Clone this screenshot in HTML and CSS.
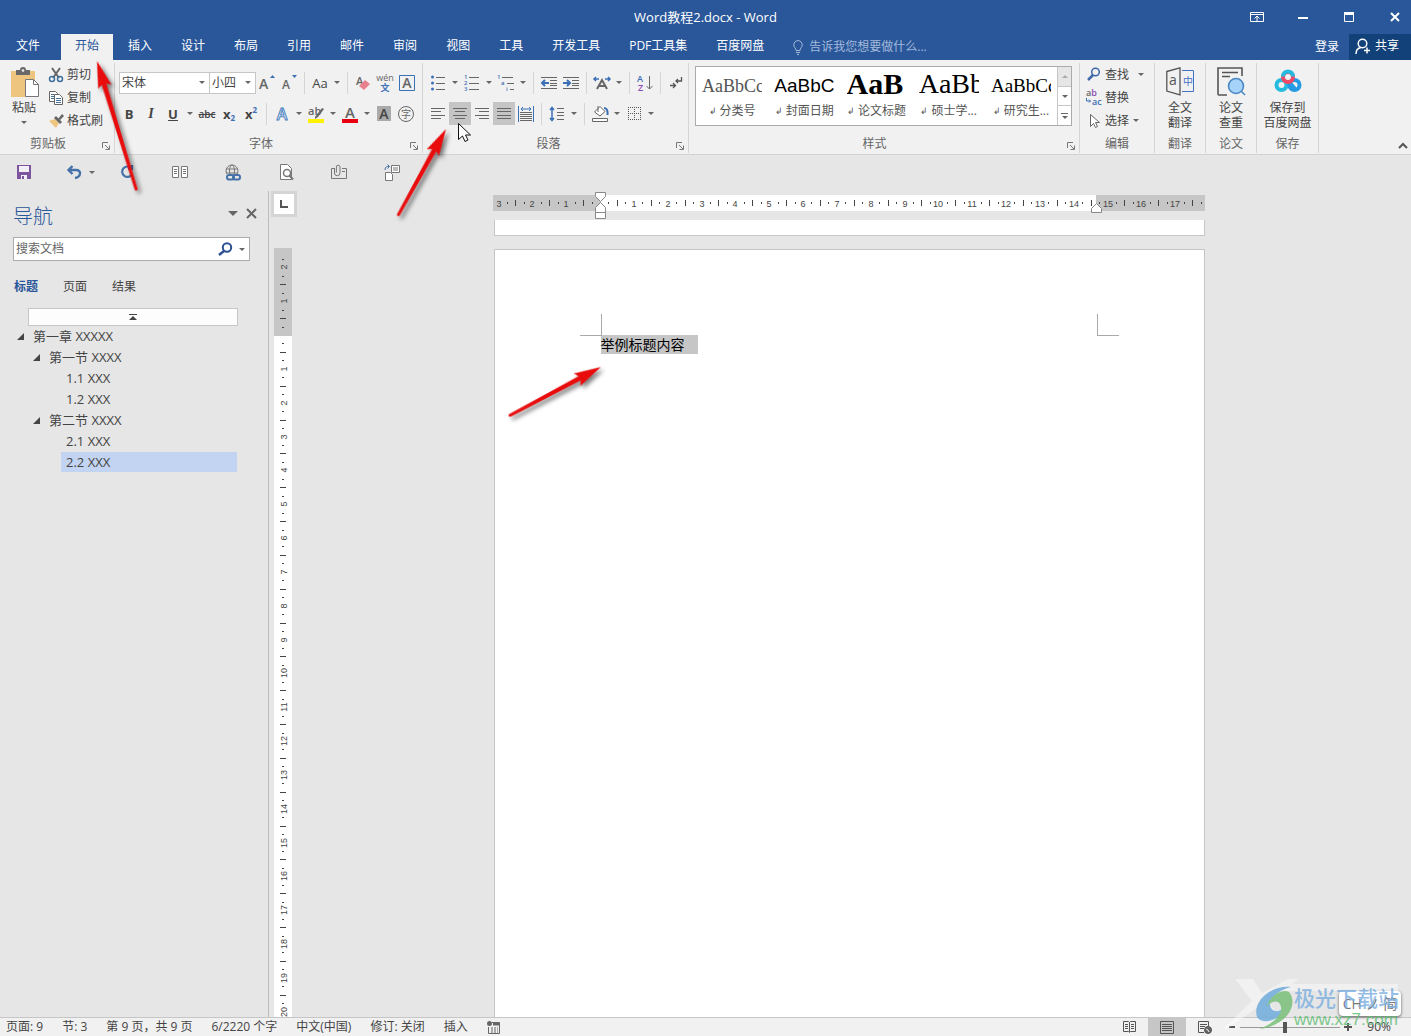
FILE: index.html
```html
<!DOCTYPE html>
<html lang="zh-CN">
<head>
<meta charset="utf-8">
<title>Word教程2.docx - Word</title>
<link rel="stylesheet" href="styles.css">
</head>
<body>
<header class="titlebar">
  <h1 class="title">Word教程2.docx - Word</h1>
  <div class="window-buttons">
    <button aria-label="功能区显示选项"><svg width="14" height="12" fill="none" stroke="#fff"><path d="M.5 1.500h13v9H.5zM.5 3.500h13M7 10V5M4.500 7.500 7 5l2.500 2.500"/></svg></button>
    <button aria-label="最小化"><svg width="10" height="12"><path d="M0 6h10v2H0z" fill="#fff"/></svg></button>
    <button aria-label="最大化"><svg width="10" height="12" fill="none" stroke="#fff"><path d="M.5 1.500h9v9h-9z"/><path d="M0 2.500h10" stroke-width="3"/></svg></button>
    <button aria-label="关闭"><svg width="10" height="10" stroke="#fff" stroke-width="2"><path d="m1 1 8 8M9 1 1 9"/></svg></button>
  </div>
</header>

<nav class="tabs">
  <button class="tab file">文件</button>
  <button class="tab active">开始</button>
  <button class="tab">插入</button>
  <button class="tab">设计</button>
  <button class="tab">布局</button>
  <button class="tab">引用</button>
  <button class="tab">邮件</button>
  <button class="tab">审阅</button>
  <button class="tab">视图</button>
  <button class="tab">工具</button>
  <button class="tab">开发工具</button>
  <button class="tab">PDF工具集</button>
  <button class="tab">百度网盘</button>
  <button class="tell-me"><svg width="10" height="15" fill="none" stroke="currentColor" stroke-width="1"><path d="M3 10.500C3 8 .8 7.500.8 4.800a4.200 4.200 0 0 1 8.400 0C9.200 7.500 7 8 7 10.500zM3 12.500h4M4 14.500h2"/></svg>告诉我您想要做什么...</button>
  <button class="login">登录</button>
  <button class="share"><svg width="16" height="17" fill="none" stroke="#fff" stroke-width="1.500"><circle cx="7.500" cy="5.500" r="4.300"/><path d="M1 16c0-4 2-6 5-6.500M9 12.500h6M12 9.500v6"/></svg>共享</button>
</nav>

<section class="ribbon">
  <div class="group clipboard">
    <div class="group-body clip-body">
      <button class="big paste">
        <svg width="30" height="31"><path d="M2 4h24v26H2z" fill="#edc57f"/><path d="M7 3h4a3 3 0 0 1 6 0h4v5H7z" fill="#696969"/><circle cx="14" cy="3.500" r="1.300" fill="#f1f1f1"/><path d="M16.500 12.500h8l5 5v12h-13z" fill="#fff" stroke="#777"/><path d="M24.500 12.500v5h5" fill="none" stroke="#777"/></svg>
        粘贴<i class="caret"></i>
      </button>
      <div class="stack">
        <button class="small"><svg width="16" height="16" fill="none"><path d="m4 1 7 10M12 1 5 11" stroke="#666" stroke-width="2"/><circle cx="4" cy="12" r="2.500" stroke="#41719c" stroke-width="1.500"/><circle cx="12" cy="12" r="2.500" stroke="#41719c" stroke-width="1.500"/></svg>剪切</button>
        <button class="small"><svg width="16" height="16" fill="#fff" stroke="#666"><path d="M1.500 1.500h6l2 2v8h-8z"/><path d="M3 4.500h3M3 6.500h3M3 8.500h3" stroke="#41719c"/><path d="M6.500 4.500h5l3 3v7h-8z"/><path d="M8 8.500h5M8 10.500h5M8 12.500h5" stroke="#41719c"/></svg>复制</button>
        <button class="small"><svg width="16" height="16"><path d="m1 8 6-2 4 4-3 5z" fill="#edc57f"/><path d="m6 5 2-2 6 6-2 2z" fill="#666"/><path d="m10 6 4-5 2 2-4 4z" fill="#666"/></svg>格式刷</button>
      </div>
    </div>
    <div class="group-label">剪贴板</div><button class="launcher" aria-label="剪贴板设置"><svg width="8" height="8" fill="none" stroke="#777"><path d="M.5 6V.500H6M3 3l4 4M7.500 3.500v4h-4"/></svg></button>
  </div>

  <div class="group font">
    <div class="group-body">
      <div class="row">
        <label class="combo name"><select aria-label="字体"><option>宋体</option></select><i class="caret"></i></label>
        <label class="combo size"><select aria-label="字号"><option>小四</option></select><i class="caret"></i></label>
        <button class="tool"><svg width="18" height="18"><text x="1" y="15" class="ic" font-size="14">A</text><path d="m12 4 2.500-3L17 4z" fill="#3b6fb6"/></svg></button>
        <button class="tool"><svg width="18" height="18"><text x="2" y="15" class="ic" font-size="12">A</text><path d="m12 1 2.500 3L17 1z" fill="#3b6fb6"/></svg></button>
        <i class="sep"></i>
        <button class="tool case">Aa</button><i class="caret drop"></i>
        <i class="sep"></i>
        <button class="tool"><svg width="18" height="18"><text x="2" y="11" class="ic" font-size="11">A</text><path d="m5 12 6-6 5 4-6 6z" fill="#e8808e"/></svg></button>
        <button class="tool"><svg width="18" height="20"><text x="9" y="8" text-anchor="middle" font-size="9" class="ic thin">wén</text><text x="9" y="18" text-anchor="middle" font-size="9" class="ic blue">文</text></svg></button>
        <button class="tool"><svg width="16" height="16"><path d="M.5.500h15v15H.5z" fill="none" stroke="#3b6fb6"/><text x="8" y="13" text-anchor="middle" class="ic" font-size="14">A</text></svg></button>
      </div>
      <div class="row">
        <button class="tool bold">B</button>
        <button class="tool italic">I</button>
        <button class="tool under">U</button><i class="caret drop"></i>
        <button class="tool strike">abc</button>
        <button class="tool bold">x<sub>2</sub></button>
        <button class="tool bold">x<sup>2</sup></button>
        <i class="sep"></i>
        <button class="tool"><svg width="18" height="18"><text x="9" y="15" text-anchor="middle" font-size="16" font-weight="600" font-family="Open Sans" fill="#fff" stroke="#4a7fc1" stroke-width="1">A</text></svg></button><i class="caret drop"></i>
        <button class="tool"><svg width="18" height="20"><text x="1" y="11" class="ic" font-size="11">ab</text><path d="m8 13 7-9 2 1-6 8-3 2z" fill="#666"/><path d="M1 15h16v4H1z" fill="#fff200"/></svg></button><i class="caret drop"></i>
        <button class="tool"><svg width="18" height="20"><text x="9" y="14" text-anchor="middle" class="ic" font-size="15">A</text><path d="M1 15h16v4H1z" fill="#e60012"/></svg></button><i class="caret drop"></i>
        <button class="tool"><svg width="14" height="15"><path d="M0 0h14v15H0z" fill="#aaa"/><text x="7" y="13" text-anchor="middle" class="ic dark" font-size="14">A</text></svg></button>
        <button class="tool"><svg width="16" height="16"><circle cx="8" cy="8" r="7.500" fill="none" stroke="#666"/><text x="8" y="12" text-anchor="middle" class="ic thin" font-size="10">字</text></svg></button>
      </div>
    </div>
    <div class="group-label">字体</div><button class="launcher" aria-label="字体设置"><svg width="8" height="8" fill="none" stroke="#777"><path d="M.5 6V.500H6M3 3l4 4M7.500 3.500v4h-4"/></svg></button>
  </div>

  <div class="group para">
    <div class="group-body">
      <div class="row">
        <button class="tool" aria-label="项目符号"><svg width="14" height="16"><g fill="#3b6fb6"><circle cx="1.500" cy="2" r="1.500"/><circle cx="1.500" cy="8" r="1.500"/><circle cx="1.500" cy="14" r="1.500"/></g><path d="M5 2.500h9M5 8.500h9M5 14.500h9" stroke="#666"/></svg></button><i class="caret drop"></i>
        <button class="tool"><svg width="16" height="18"><g class="num" font-size="6"><text x="0" y="5">1</text><text x="0" y="11">2</text><text x="0" y="17">3</text></g><path d="M5 3.500h10M5 9.500h10M5 15.500h10" stroke="#666"/></svg></button><i class="caret drop"></i>
        <button class="tool"><svg width="18" height="18"><g class="num" font-size="6"><text x="0" y="5">1</text><text x="4" y="11">a</text><text x="9" y="17">i</text></g><path d="M5 3.500h11M10 9.500h7M13 15.500h4" stroke="#666"/></svg></button><i class="caret drop"></i>
        <i class="sep"></i>
        <button class="tool" aria-label="减少缩进"><svg width="16" height="14" fill="none" stroke="#666"><path d="M0 1.500h16M9 4.500h7M9 7.500h7M9 9.500h7M0 12.500h16"/><path d="M8 7H1M4 4 1 7l3 3" stroke="#3b6fb6" stroke-width="2"/></svg></button>
        <button class="tool" aria-label="增加缩进"><svg width="16" height="14" fill="none" stroke="#666"><path d="M0 1.500h16M9 4.500h7M9 7.500h7M9 9.500h7M0 12.500h16"/><path d="M0 7h7M4 4l3 3-3 3" stroke="#3b6fb6" stroke-width="2"/></svg></button>
        <i class="sep"></i>
        <button class="tool"><svg width="18" height="16" fill="none"><path d="m4 14 5-9 5 9M6 11h6" stroke="#666" stroke-width="2"/><path d="M1 4h5M3 2 1 4l2 2M17 4h-5M15 2l2 2-2 2" stroke="#3b6fb6" stroke-width="1.500"/></svg></button><i class="caret drop"></i>
        <i class="sep"></i>
        <button class="tool"><svg width="16" height="18"><text x="0" y="8" font-size="9" class="ic blue">A</text><text x="1" y="17" font-size="9" class="ic purple">Z</text><path d="M12.500 2v13M9.500 12l3 3 3-3" fill="none" stroke="#666"/></svg></button>
        <i class="sep"></i>
        <button class="tool" aria-label="显示编辑标记"><svg width="14" height="14" fill="none" stroke="#555" stroke-width="1.300"><path d="M12.500 1v4H7M9 3 7 5l2 2M1 9.500h5M4 7l2.500 2.500L4 12"/></svg></button>
      </div>
      <div class="row">
        <button class="tool" aria-label="左对齐"><svg width="14" height="11" stroke="#666"><path d="M0 .5h14M0 3.500h10M0 7.500h14M0 10.500h10"/></svg></button>
        <button class="tool on" aria-label="居中"><svg width="14" height="11" stroke="#666"><path d="M0 .5h14M2 3.500h10M0 7.500h14M2 10.500h10"/></svg></button>
        <button class="tool" aria-label="右对齐"><svg width="14" height="11" stroke="#666"><path d="M0 .5h14M4 3.500h10M0 7.500h14M4 10.500h10"/></svg></button>
        <button class="tool on" aria-label="两端对齐"><svg width="14" height="11" stroke="#666"><path d="M0 .5h14M0 3.500h14M0 7.500h14M0 10.500h14"/></svg></button>
        <button class="tool" aria-label="分散对齐"><svg width="16" height="16" fill="none" stroke="#3b6fb6"><path d="M.5 0v16M15.500 0v16M3 3h10M5 1 3 3l2 2M11 1l2 2-2 2"/><path d="M2 6.500h12M2 8.500h12M2 10.500h12M2 12.500h12M2 14.500h12" stroke="#666"/></svg></button>
        <i class="sep"></i>
        <button class="tool" aria-label="行距"><svg width="16" height="16" fill="none" stroke="#666"><path d="M8 2.500h7M8 6.500h7M8 9.500h7M8 13.500h7"/><path d="M3 1v14M1 4l2-2.500L5 4M1 12l2 2.500L5 12" stroke="#3b6fb6" stroke-width="1.500"/></svg></button><i class="caret drop"></i>
        <i class="sep"></i>
        <button class="tool" aria-label="底纹"><svg width="17" height="17" fill="#fff" stroke="#666"><path d="M6 1v6M2.500 7 8 1.500l5 5L8 11z"/><path d="M12 3c3 0 4 3 3.500 7" fill="none" stroke="#3b6fb6" stroke-width="2"/><path d="M.5 13.500h15v3H.5z"/></svg></button><i class="caret drop"></i>
        <button class="tool" aria-label="边框"><svg width="13" height="13" fill="none" stroke="#555" stroke-dasharray="1 1"><path d="M0 .5h13M0 6.500h13M0 12.500h13M.5 0v13M6.500 0v13M12.500 0v13"/></svg></button><i class="caret drop"></i>
      </div>
    </div>
    <div class="group-label">段落</div><button class="launcher" aria-label="段落设置"><svg width="8" height="8" fill="none" stroke="#777"><path d="M.5 6V.500H6M3 3l4 4M7.500 3.500v4h-4"/></svg></button>
  </div>

  <div class="group styles">
    <div class="gallery">
      <button class="style"><span class="sample s1">AaBbCc</span><span class="style-name"><i class="mark">↲</i>分类号</span></button>
      <button class="style"><span class="sample s2">AaBbCc</span><span class="style-name"><i class="mark">↲</i>封面日期</span></button>
      <button class="style"><span class="sample s3">AaB</span><span class="style-name"><i class="mark">↲</i>论文标题</span></button>
      <button class="style"><span class="sample s4">AaBb</span><span class="style-name"><i class="mark">↲</i>硕士学...</span></button>
      <button class="style"><span class="sample s5">AaBbCc</span><span class="style-name"><i class="mark">↲</i>研究生...</span></button>
      <div class="scroller"><button class="off" aria-label="上一行"><i class="caret up"></i></button><button aria-label="下一行"><i class="caret"></i></button><button class="more" aria-label="更多"><i class="caret"></i></button></div>
    </div>
    <div class="group-label">样式</div><button class="launcher" aria-label="样式设置"><svg width="8" height="8" fill="none" stroke="#777"><path d="M.5 6V.500H6M3 3l4 4M7.500 3.500v4h-4"/></svg></button>
  </div>

  <div class="group edit">
    <div class="group-body stack">
      <button class="small"><svg width="16" height="16" fill="none" stroke="#3f68a8"><circle cx="9.500" cy="5" r="3.800" stroke-width="1.500"/><path d="m7 8-5 5" stroke-width="2.500"/></svg>查找<i class="caret far"></i></button>
      <button class="small"><svg width="16" height="18"><text x="0" y="7" class="ic" font-size="9">a<tspan fill="#8c4bb0">b</tspan></text><text x="6" y="16" class="ic blue" font-size="9">ac</text><path d="M.5 9v3h4M3 10.500 4.500 12 3 13.500" fill="none" stroke="#3b6fb6"/></svg>替换</button>
      <button class="small"><svg width="16" height="16"><path d="M4.500 1.500v12l3-3 2 4 2-1-2-4h4z" fill="#fff" stroke="#666"/></svg>选择<i class="caret"></i></button>
    </div>
    <div class="group-label">编辑</div>
  </div>

  <div class="group narrow">
    <div class="group-body"><button class="big"><svg width="28" height="29" fill="none" stroke="#555"><path d="M.8 4.500 14 .8v27L.8 24z" stroke-width="1.300"/><path d="M16 3.500h11.500v21H16" stroke="#4472c4"/><text x="7" y="18" text-anchor="middle" font-size="14" fill="#555" stroke="none">a</text><text x="22" y="18" text-anchor="middle" font-size="10" fill="#4472c4" stroke="none">中</text></svg><span>全文<br>翻译</span></button></div>
    <div class="group-label">翻译</div>
  </div>
  <div class="group narrow">
    <div class="group-body"><button class="big"><svg width="28" height="29" fill="none" stroke="#555" stroke-width="1.600"><path d="M10 28H2a1 1 0 0 1-1-1V1h24v8M5 5.500h16M5 9.500h8"/><circle cx="19" cy="19" r="7.500" fill="#a5d3fa" stroke="#4a87c0"/><path d="m24 24 4 4" stroke="#4a87c0"/></svg><span>论文<br>查重</span></button></div>
    <div class="group-label">论文</div>
  </div>
  <div class="group save">
    <div class="group-body"><button class="big"><svg width="28" height="29" fill="none" stroke-width="4"><circle cx="7.500" cy="18" r="5" stroke="#24bbdf"/><circle cx="20.500" cy="18" r="5" stroke="#259be5"/><path d="m15 15 7 8" stroke="#259be5"/><circle cx="14" cy="10" r="5" stroke="#ef4b68"/><path d="M9 9.500a5 5 0 0 1 10 0" stroke="#24bbdf"/></svg><span>保存到<br>百度网盘</span></button></div>
    <div class="group-label">保存</div>
  </div>
  <button class="collapse" aria-label="折叠功能区"><svg width="10" height="7" fill="none" stroke="#555" stroke-width="2"><path d="m1 6 4-4 4 4"/></svg></button>
</section>

<div class="quick">
  <button aria-label="保存"><svg width="14" height="14"><path d="M0 0h14v14H0z" fill="#7d559f"/><path d="M2 1h10v6H2zM4 10h6v4H4z" fill="#f4eef8"/><path d="M5 11h2v3H5z" fill="#7d559f"/></svg></button>
  <button class="undo" aria-label="撤消"><svg width="15" height="14" fill="none" stroke="#4472a8" stroke-width="2.400"><path d="M1 5h8c6 0 5 7-1 8M5.500 1 1.500 5l4 4"/></svg></button>
  <i class="caret undo-drop"></i>
  <button aria-label="重复"><svg width="14" height="14" fill="none" stroke="#4472a8" stroke-width="2.200"><path d="M11 3a5.200 5.200 0 1 0 1 6M8 4h4V0"/></svg></button>
  <button aria-label="阅读"><svg width="17" height="12" fill="#fff" stroke="#777"><path d="M.5.500h6v11h-6zM9.500.500h6v11h-6zM2 3.500h3M2 5.500h3M2 7.500h3M11 3.500h3M11 5.500h3M11 7.500h3"/></svg></button>
  <button aria-label="超链接"><svg width="17" height="17" fill="none" stroke="#777"><circle cx="7" cy="7" r="6"/><ellipse cx="7" cy="7" rx="2.500" ry="6"/><path d="M1 5h12M1 9h12"/><path d="M1 10h16v7H1z" fill="#e6e6e6" stroke="none"/><rect x="2" y="11" width="7" height="4.500" rx="2" stroke="#4472a8" stroke-width="2"/><rect x="8" y="11" width="7" height="4.500" rx="2" stroke="#4472a8" stroke-width="2"/></svg></button>
  <button aria-label="打印预览"><svg width="15" height="17" fill="#fff" stroke="#777"><path d="M1.500.500h7l4 4v11h-11z"/><circle cx="8" cy="9" r="3.500" stroke-width="1.500"/><path d="m10.500 11.500 3.500 4" stroke-width="2"/></svg></button>
  <button aria-label="附件"><svg width="17" height="16" fill="none" stroke="#777"><path d="M3 4.500H.5v10h15v-10H11M11 7.500h3"/><path d="M3.500 4v5a2.500 2.500 0 0 0 5.500 0V3a1.800 1.800 0 0 0-3.600 0v5.500"/></svg></button>
  <button aria-label="发送"><svg width="17" height="17" fill="#fff" stroke="#777"><path d="M7.500 1.500h8v7h-8zM9 4h5M9 6h5M1.500 8.500h5l2 2v6h-7z"/><path d="M1 6c0-3 2-4 4-3.500M3.500.500l2 2-2 2" fill="none" stroke="#4472a8"/></svg></button>
</div>

<main class="workspace">
  <aside class="navpane">
    <div class="nav-head"><h2>导航</h2><button aria-label="任务窗格选项"><i class="caret large"></i></button><button aria-label="关闭窗格"><svg width="11" height="11" stroke="#666" stroke-width="2"><path d="m1 1 9 9M10 1 1 10"/></svg></button></div>
    <div class="search"><input type="text" placeholder="搜索文档" aria-label="搜索文档"><svg width="15" height="14" fill="none" stroke="#2b4f92"><circle cx="9" cy="5.500" r="4.200" stroke-width="2"/><path d="m6 9-5 4" stroke-width="2.500"/></svg><i class="caret"></i></div>
    <div class="nav-tabs"><button class="sel">标题</button><button>页面</button><button>结果</button></div>
    <button class="jump" aria-label="跳转到开头"><svg width="8" height="6" fill="#444"><path d="M0 0h8v1H0zM4 2l4 4H0z"/></svg></button>
    <ul class="tree">
      <li class="l1"><i class="fold"></i>第一章 XXXXX</li>
      <li class="l2"><i class="fold"></i>第一节 XXXX</li>
      <li class="l3">1.1 XXX</li>
      <li class="l3">1.2 XXX</li>
      <li class="l2"><i class="fold"></i>第二节 XXXX</li>
      <li class="l3">2.1 XXX</li>
      <li class="l3 current">2.2 XXX</li>
    </ul>
  </aside>
  <div class="ruler-col">
    <button class="tab-stop" aria-label="左对齐式制表符"><svg width="8" height="8"><path d="M1 0v7h7" fill="none" stroke="#555" stroke-width="2"/></svg></button>
    <svg class="vruler" id="vruler" width="18"></svg>
  </div>
  <div class="canvas">
    <svg class="hruler" id="hruler" width="712" height="26"></svg>
    <div class="page previous"></div>
    <article class="page"><div class="text-area"><p><mark>举例标题内容</mark></p></div></article>
  </div>
</main>

<footer class="status">
  <span>页面: 9</span><span>节: 3</span><span>第 9 页，共 9 页</span><span>6/2220 个字</span><span>中文(中国)</span><span>修订: 关闭</span><span>插入</span>
  <svg width="13" height="13" fill="none" stroke="#666"><path d="M5 1.500h7.500v11h-11V6"/><path d="M4 7h7M4 9h7M4 11h7" stroke-dasharray="2 1"/><path d="M6 3h6" stroke-width="3"/><circle cx="2.500" cy="2.500" r="2.500" fill="#666" stroke="none"/></svg>
  <div class="view-tools">
    <div class="views">
      <button aria-label="阅读视图"><svg width="13" height="12" fill="none" stroke="#555"><path d="M.5.500h5l1 1 1-1h5v10h-5l-1 1-1-1h-5zM6.500 1v10M2 3.500h3M2 5.500h3M2 7.500h3M8 3.500h3M8 5.500h3M8 7.500h3"/></svg></button>
      <button class="on" aria-label="页面视图"><svg width="14" height="13" fill="none" stroke="#555"><path d="M.5.500h13v12H.5zM2 3.500h10M2 5.500h10M2 7.500h10M2 9.500h10"/></svg></button>
      <button aria-label="Web 版式视图"><svg width="14" height="13" fill="none" stroke="#555"><path d="M6 11.500H.5V.500h10V5M2 3.500h7M2 5.500h5M2 7.500h4"/><circle cx="10" cy="9" r="3.500" fill="#666"/><path d="m8 8 2 1 1 2" stroke="#eee"/></svg></button>
    </div>
    <button class="zoom-btn" aria-label="缩小"><svg width="6" height="8"><path d="M0 3h6v2H0z" fill="#555"/></svg></button>
    <input class="zoom" type="range" min="10" max="190" value="90" aria-label="显示比例">
    <button class="zoom-btn" aria-label="放大"><svg width="8" height="8"><path d="M0 3h3V0h2v3h3v2H5v3H3V5H0z" fill="#555"/></svg></button>
    <span class="percent">90%</span>
  </div>
</footer>

<svg class="annotations" width="640" height="440" aria-hidden="true">
  <defs><path id="arrow" d="M0 0 27-7 24-2V2L27 7Z"/></defs>
  <g class="arrows">
    <g transform="translate(97 61) rotate(73)"><use href="#arrow"/><path d="M20-2.500 134-1.500a1.500 1.500 0 0 1 0 3L20 2.500z"/></g>
    <g transform="translate(446 129) rotate(119)"><use href="#arrow"/><path d="M20-2.500 98-1.500a1.500 1.500 0 0 1 0 3L20 2.500z"/></g>
    <g transform="translate(601 367) rotate(152)"><use href="#arrow"/><path d="M20-2.500 103-1.500a1.500 1.500 0 0 1 0 3L20 2.500z"/></g>
  </g>
  <path d="M458.500 123.500v16l4-3.500 2.500 5.500 3-1.500-2.500-5h5z" fill="#fff" stroke="#111"/>
</svg>

<div class="ime">CH ノ 简</div>
<div class="watermark">
  <svg width="180" height="56"><g fill="#fff" opacity=".55"><path d="M12 0h18l9 14L65 0h11L45 22l15 20H44L34 29 4 50H0l29-28z"/><path d="M60 5h115v7H60z"/></g><path d="M34 38C29 22 48 6 68 8 54 11 44 22 48 29c3 5 11 4 14-2-3 14-22 20-28 11z" fill="#6aa9db"/><path d="M66 13c10 12-2 34-30 37 14-5 26-16 21-25-3-5-10-2-13 3 1-9 14-19 22-15z" fill="#72be72"/></svg>
  <div class="wm-text"><b>极光下载站</b><span>www.xz7.com</span></div>
</div>
<script src="ruler.js"></script>
</body>
</html>
```
FILE: styles.css
```css
* { box-sizing: border-box; }
body { margin: 0; height: 100vh; position: relative; display: flex; flex-direction: column; overflow: hidden; background: #e6e6e6; color: #444; font: 12px/16px "Open Sans", "Noto Sans CJK SC", sans-serif; }
button { font: inherit; color: inherit; background: none; border: 0; padding: 0; display: flex; align-items: center; justify-content: center; white-space: nowrap; }
svg { flex: none; display: block; overflow: visible; }
.caret { flex: none; width: 0; height: 0; border: 3px solid transparent; border-top-color: #666; border-bottom: 0; }
.caret.up { border-top: 0; border-bottom: 3px solid #aaa; }
.caret.large { border-width: 5px 5px 0; }

.titlebar { background: #2a579a; color: #fff; height: 34px; flex: none; display: grid; grid-template-columns: 1fr auto 1fr; align-items: center; }
.title { grid-column: 2; margin: 0; font-size: 13px; font-weight: 400; }
.window-buttons { justify-self: end; display: flex; gap: 14px; }
.window-buttons button { width: 32px; height: 32px; }

.tabs { background: #2a579a; color: #fff; height: 26px; flex: none; display: flex; gap: 1px; }
.tab { padding: 0 14px 2px; }
.tab.file { padding: 0 16px 2px; margin-right: 4px; }
.tab.active { background: #f1f1f1; color: #2a579a; }
.tell-me { margin-left: 14px; gap: 6px; color: #a3b9da; }
.login { margin-left: auto; padding: 0 9px; }
.share { background: #124078; padding: 0 12px 2px 6px; gap: 4px; }

.ribbon { background: #f1f1f1; height: 95px; flex: none; border-bottom: 1px solid #d2d2d2; display: flex; }
.group { position: relative; flex: none; height: 90px; margin-top: 3px; border-right: 1px solid #d5d5d5; display: flex; flex-direction: column; }
.group-label { margin-top: auto; text-align: center; color: #666; padding-bottom: 1px; }
.launcher { position: absolute; right: 4px; bottom: 3px; width: 8px; height: 8px; }
.clipboard { width: 115px; }
.clipboard .group-label, .font .group-label, .para .group-label, .styles .group-label { padding-right: 18px; }
.font { width: 308px; padding-left: 3px; }
.para { width: 266px; padding-left: 4px; }
.styles { width: 391px; padding: 3px 7px 0 6px; }
.edit { width: 75px; padding-left: 6px; }
.edit .group-label { padding-right: 6px; }
.narrow { width: 51px; }
.save { width: 62px; }
.clip-body { display: flex; }
.big { flex-direction: column; width: 100%; padding-top: 4px; line-height: 15px; }
.big span { margin-top: 4px; }
.big.paste { width: 48px; align-self: flex-start; }
.paste svg { margin-bottom: 2px; }
.paste .caret { margin-top: 6px; }
.small { height: 23px; gap: 3px; }
.small .caret { margin-left: 1px; }
.small .caret.far { margin-left: 6px; }
.stack { display: flex; flex-direction: column; align-items: flex-start; }
.row { display: flex; align-items: center; height: 23px; margin-top: 8px; }
.tool { width: 22px; height: 23px; flex: none; font-size: 13px; }
.tool.on { background: #c5c5c5; }
.drop { margin: 0 3px; }
.sep { flex: none; width: 1px; height: 22px; background: #d5d5d5; margin: 0 4px; }
.combo { position: relative; border: 1px solid #c6c6c6; background: #fff; height: 22px; display: flex; align-items: center; padding-right: 4px; }
.combo.name { width: 91px; margin-left: 1px; }
.combo.size { width: 47px; margin-left: -1px; }
.combo select { appearance: none; border: 0; background: none; font: inherit; color: inherit; flex: 1; min-width: 0; padding: 0 0 0 2px; }
.ic { font-family: "Open Sans", "Noto Sans CJK SC", sans-serif; font-weight: 600; fill: #666; }
.ic.thin { font-weight: 400; }
.ic.dark { fill: #444; }
.ic.blue, .num { fill: #3b6fb6; font-weight: 600; }
.ic.purple { fill: #8c4bb0; }
.case { font-size: 13px; }
.bold { font-weight: 700; }
.italic { font: italic 700 14px "Liberation Serif", serif; }
.under { font-weight: 700; text-decoration: underline; }
.strike { font-size: 10px; font-weight: 600; text-decoration: line-through; }
sub, sup { font-size: 8px; color: #3b6fb6; line-height: 10px; }
sub { align-self: flex-end; padding-bottom: 2px; }
sup { align-self: flex-start; padding-top: 3px; }

.gallery { display: flex; background: #fff; border: 1px solid #ababab; height: 60px; }
.style { flex: 1; min-width: 0; flex-direction: column; justify-content: flex-start; color: #555; }
.style-name { display: flex; align-items: center; gap: 3px; }
.mark { font-style: normal; font-size: 9px; }
.sample { width: 60px; height: 36px; line-height: 38px; overflow: hidden; text-align: left; color: #000; font-family: "Liberation Serif", serif; }
.s1 { font-size: 18px; color: #555; }
.s2 { font-size: 19px; font-family: "Liberation Sans", sans-serif; }
.s3 { font-size: 30px; font-weight: 700; line-height: 34px; }
.s4 { font-size: 28px; line-height: 34px; }
.s5 { font-size: 19px; }
.scroller { width: 14px; display: flex; flex-direction: column; border-left: 1px solid #c6c6c6; }
.scroller button { flex: 1; border-bottom: 1px solid #c6c6c6; }
.scroller button:last-child { border: 0; }
.scroller .off { background: #e6e6e6; }
.more { flex-direction: column; gap: 2px; }
.more::before { content: ""; width: 7px; height: 1px; background: #666; }
.collapse { margin: auto 3px 5px auto; }

.quick { display: flex; height: 36px; flex: none; align-items: center; padding: 0 0 2px 16px; gap: 37px; }
.quick button { width: 16px; height: 16px; }
.quick .undo { margin-left: -3px; }
.undo-drop { margin: 0 -13px 0 -30px; }

.workspace { flex: 1; min-height: 0; display: flex; }
.navpane { width: 269px; flex: none; border-right: 1px solid #bcbcbc; padding: 13px 18px 0 13px; }
.nav-head { display: flex; align-items: center; gap: 8px; margin-right: -7px; }
.nav-head h2 { flex: 1; margin: 0; font: 300 20px/26px "Open Sans", "Noto Sans CJK SC", sans-serif; color: #2a579a; }
.nav-head button { align-self: flex-start; height: 18px; }
.search { margin-top: 7px; height: 24px; display: flex; align-items: center; background: #fff; border: 1px solid #ababab; padding-right: 4px; gap: 6px; }
.search input { flex: 1; min-width: 0; border: 0; background: none; outline: 0; font: inherit; padding: 0 2px; }
.search input::placeholder { color: #666; }
.nav-tabs { display: flex; gap: 25px; margin-top: 18px; padding-left: 1px; }
.nav-tabs .sel { color: #2a579a; font-weight: 700; }
.jump { width: 210px; height: 18px; margin: 13px 0 0 15px; background: #fdfdfd; border: 1px solid #c6c6c6; }
.tree { list-style: none; margin: 0; padding: 0; font-size: 13px; line-height: 18px; }
.tree li { display: flex; align-items: center; height: 21px; gap: 9px; padding-bottom: 1px; }
.tree .l1 { padding-left: 4px; }
.tree .l2 { padding-left: 20px; }
.tree .l3 { height: 20px; margin: 0 13px 1px 48px; padding: 0 0 0 5px; }
.fold { width: 7px; height: 7px; border: solid transparent; border-width: 0 0 7px 7px; border-bottom-color: #444; }
.tree .current { background: #c3d4f2; }

.ruler-col { width: 28px; flex: none; display: flex; flex-direction: column; padding-left: 2px; }
.tab-stop { width: 26px; height: 26px; background: #fff; border: 3px solid #d5d5d5; }
.vruler { margin: 31px 0 0 3px; flex: 1; min-height: 0; }
.hruler { margin: 3px 0 0; }
.ruler-text { font: 9px "Liberation Sans", sans-serif; fill: #444; text-anchor: middle; }
.canvas { flex: 1; display: flex; flex-direction: column; align-items: center; padding-right: 10px; }
.page { width: 711px; flex: 1; background: #fff; border: solid #c6c6c6; border-width: 1px 1px 0; padding: 85px 105px 0 106px; }
.page.previous { flex: none; height: 16px; padding: 0; border-width: 0 1px 1px; margin-bottom: 13px; }
.text-area { position: relative; }
.text-area::before, .text-area::after { content: ""; position: absolute; top: -21px; width: 21px; height: 21px; border-bottom: 1px solid #aaa; }
.text-area::before { left: -21px; border-right: 1px solid #aaa; }
.text-area::after { right: -20px; border-left: 1px solid #aaa; }
.text-area p { margin: 0; font: 14px/19px "Noto Sans CJK SC", sans-serif; }
mark { display: inline-block; background: #c6c6c6; color: #000; padding-right: 13px; }

.status { height: 19px; flex: none; display: flex; align-items: center; gap: 19px; padding: 0 20px 0 6px; background: #f1f1f1; border-top: 1px solid #c6c6c6; white-space: nowrap; }
.view-tools { margin-left: auto; display: flex; align-items: center; gap: 4px; }
.views { display: flex; height: 18px; }
.views button { width: 38px; }
.views .on { background: #c6c6c6; }
.zoom-btn { width: 8px; }
.zoom { appearance: none; width: 100px; height: 12px; margin: 0; background: linear-gradient(#999, #999) center / 100% 1px no-repeat; }
.zoom::-webkit-slider-thumb { appearance: none; width: 4px; height: 11px; background: #555; }
.percent { margin-left: 11px; }

.annotations { position: absolute; left: 0; top: 0; pointer-events: none; }
.arrows { fill: #e80c0c; filter: drop-shadow(3px 3px 2px rgba(0, 0, 0, .5)); }
.ime { position: absolute; right: 10px; bottom: 20px; width: 62px; height: 25px; background: #fff; border-radius: 4px; box-shadow: 0 1px 3px #555; text-align: center; font-size: 14px; line-height: 25px; white-space: nowrap; color: #777; }
.watermark { position: absolute; right: 8px; bottom: 1px; width: 180px; height: 56px; pointer-events: none; opacity: .8; }
.wm-text { position: absolute; left: 71px; top: 6px; white-space: nowrap; }
.wm-text b { display: block; font-size: 21px; font-weight: 500; line-height: 26px; color: #7aaee0; }
.wm-text span { display: block; font: 17px/18px "Liberation Sans", sans-serif; color: #5fbd72; }
```
FILE: ruler.js
```js
// Both rulers are numbered in centimetres; 203 px make six of them at this zoom.
const CM = 203 / 6;
const NS = "http://www.w3.org/2000/svg";

function add(svg, name, attrs, text) {
  const el = document.createElementNS(NS, name);
  for (const key in attrs) el.setAttribute(key, attrs[key]);
  if (text !== undefined) el.textContent = text;
  svg.appendChild(el);
}

function scale(svg, zero, length, vertical, mid) {
  for (let q = -14; ; q++) {
    const pos = Math.round(zero + q * CM / 4);
    if (pos < 4) continue;
    if (pos > length - 3) break;
    if (q === 0) continue;
    const kind = Math.abs(q) % 4;
    if (kind === 0) {
      const label = Math.abs(q / 4);
      if (vertical) add(svg, "text", { class: "ruler-text", transform: `translate(${mid + 4} ${pos}) rotate(-90)` }, label);
      else add(svg, "text", { class: "ruler-text", x: pos, y: mid + 4 }, label);
    } else {
      const half = kind === 2 ? 3 : 1;
      const box = vertical
        ? { x: mid - half, y: pos, width: half * 2, height: 1 }
        : { x: pos, y: mid - half, width: 1, height: half * 2 };
      add(svg, "rect", { ...box, fill: "#444" });
    }
  }
}

const h = document.getElementById("hruler");
add(h, "rect", { x: 0, y: 1, width: 712, height: 16, fill: "#fff" });
add(h, "rect", { x: 0, y: 1, width: 108, height: 16, fill: "#c6c6c6" });
add(h, "rect", { x: 603, y: 1, width: 109, height: 16, fill: "#c6c6c6" });
scale(h, 107, 712, false, 9);
const marker = { fill: "#fff", stroke: "#888" };
add(h, "path", { d: "M102.500-1.500h10v4l-5 5-5-5zM102.500 18.500v-5l5-5 5 5v5zM102.500 18.500h10v6h-10z", ...marker });
add(h, "path", { d: "M598.500 18.500v-4l5-5 5 5v4z", ...marker });

const v = document.getElementById("vruler");
const tall = v.getBoundingClientRect().height;
add(v, "rect", { x: 0, y: 0, width: 18, height: tall, fill: "#fff" });
add(v, "rect", { x: 0, y: 0, width: 18, height: 88, fill: "#c6c6c6" });
scale(v, 87, tall, true, 9);
```
